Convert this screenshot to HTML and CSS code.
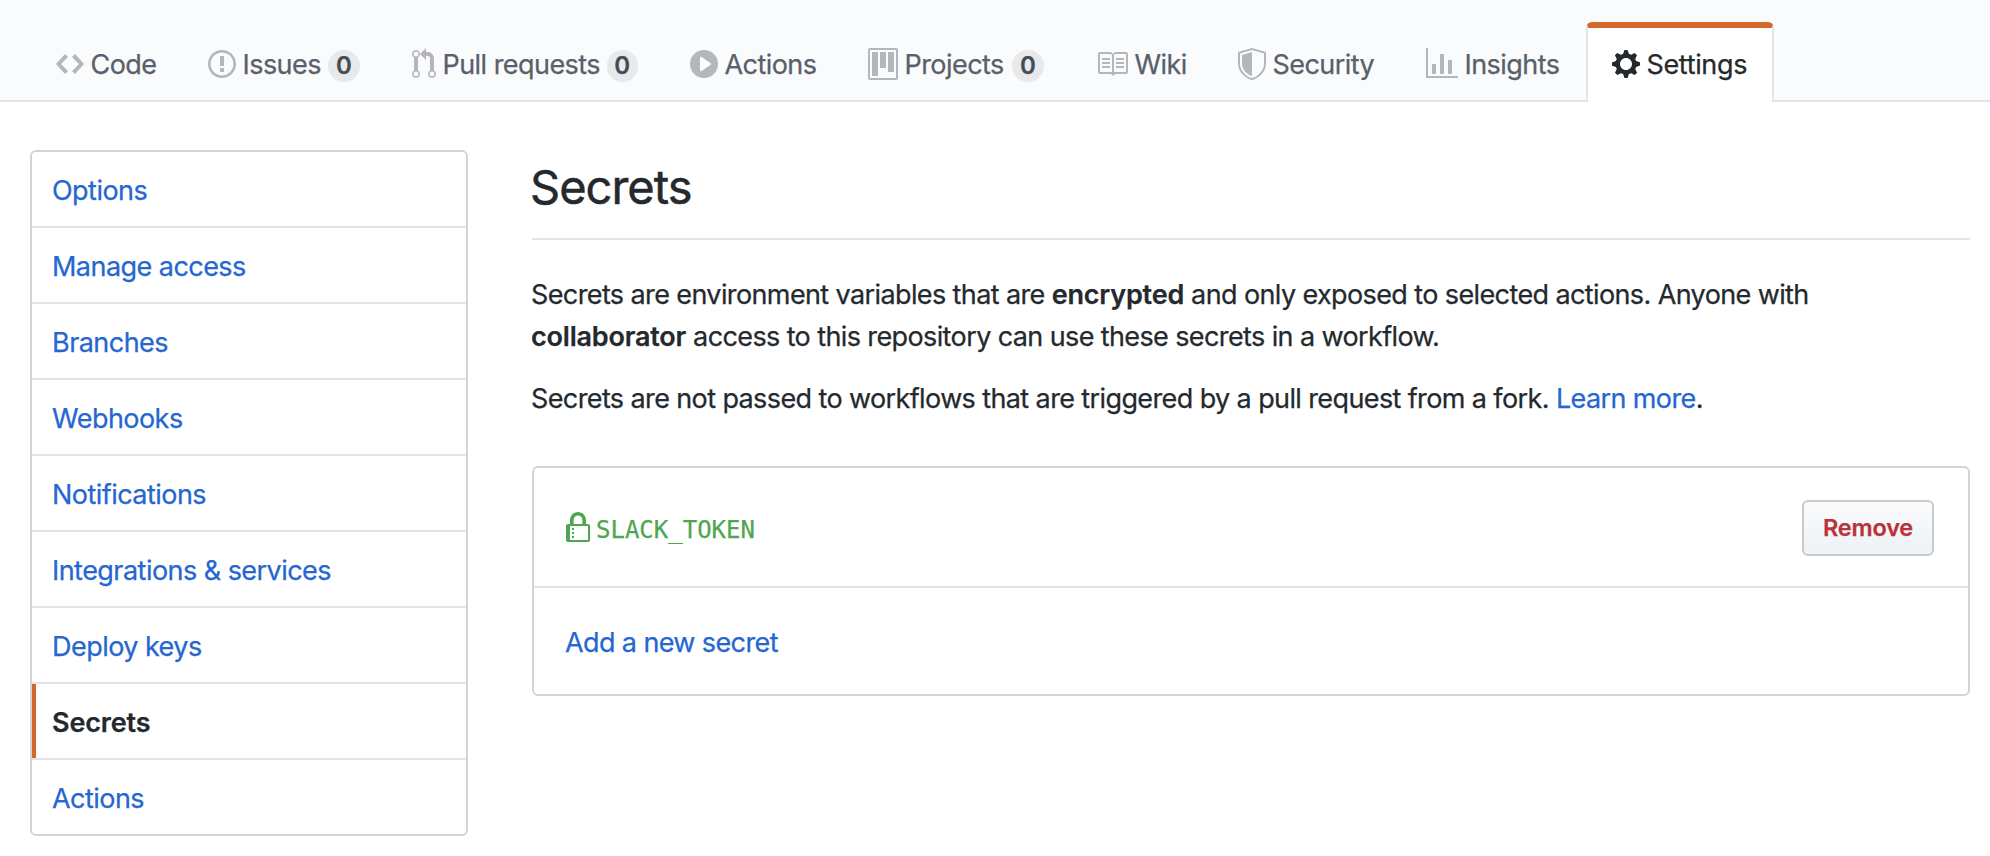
FILE: index.html
```html
<!DOCTYPE html>
<html lang="en">
<head>
<meta charset="utf-8">
<title>Secrets</title>
<link rel="stylesheet" href="styles.css">
</head>
<body>
<header class="repo-head">
  <nav class="tabs">
    <a class="tab"><svg class="icon" width="28" height="32" viewBox="0 0 14 16"><path d="M9.5 3L8 4.5 11.5 8 8 11.500 9.5 13 14 8 9.5 3zm-5 0L0 8l4.5 5L6 11.500 2.500 8 6 4.500 4.500 3z"/></svg><span class="label">Code</span></a>
    <a class="tab"><svg class="icon" width="28" height="32" viewBox="0 0 14 16"><path d="M7 2.300c3.140 0 5.700 2.560 5.700 5.700s-2.560 5.700-5.700 5.700A5.710 5.710 0 0 1 1.300 8c0-3.140 2.560-5.700 5.700-5.700zM7 1C3.140 1 0 4.140 0 8s3.140 7 7 7 7-3.140 7-7-3.140-7-7-7zm1 3H6v5h2V4zm0 6H6v2h2v-2z" fill-rule="evenodd"/></svg><span class="label">Issues</span><span class="count">0</span></a>
    <a class="tab"><svg class="icon" width="24" height="32" viewBox="0 0 12 16"><path d="M11 11.280V5c-.03-.78-.34-1.470-.94-2.060C9.460 2.350 8.780 2.030 8 2H7V0L4 3l3 3V4h1c.27.02.48.11.69.31.21.2.3.42.31.69v6.280A1.993 1.993 0 0 0 10 15a1.993 1.993 0 0 0 1-3.720zm-1 2.920c-.66 0-1.200-.55-1.200-1.200 0-.65.55-1.200 1.200-1.200.65 0 1.200.55 1.200 1.200 0 .65-.55 1.200-1.200 1.200zM4 3c0-1.110-.89-2-2-2a1.993 1.993 0 0 0-1 3.720v6.560A1.993 1.993 0 0 0 2 15a1.993 1.993 0 0 0 1-3.720V4.720c.59-.34 1-.98 1-1.720zm-.8 10c0 .66-.55 1.200-1.200 1.200-.65 0-1.200-.55-1.200-1.200 0-.65.55-1.200 1.200-1.200.65 0 1.200.55 1.200 1.200zM2 4.200C1.340 4.200.8 3.650.8 3c0-.65.55-1.200 1.200-1.200.65 0 1.200.55 1.200 1.200 0 .65-.55 1.200-1.200 1.200z" fill-rule="evenodd"/></svg><span class="label">Pull requests</span><span class="count">0</span></a>
    <a class="tab"><svg class="icon" width="28" height="32" viewBox="0 0 14 16"><path d="M14 8A7 7 0 1 1 0 8a7 7 0 0 1 14 0zm-8.223 3.482l4.599-3.066a.5.5 0 0 0 0-.832L5.777 4.518A.5.5 0 0 0 5 4.934v6.132a.5.5 0 0 0 .777.416z" fill-rule="evenodd"/></svg><span class="label">Actions</span></a>
    <a class="tab"><svg class="icon" width="30" height="32" viewBox="0 0 15 16"><path d="M10 12h3V2h-3v10zm-4-2h3V2H6v8zm-4 4h3V2H2v12zm-1 1h13V1H1v14zM14 0H1a1 1 0 0 0-1 1v14a1 1 0 0 0 1 1h13a1 1 0 0 0 1-1V1a1 1 0 0 0-1-1z" fill-rule="evenodd"/></svg><span class="label">Projects</span><span class="count">0</span></a>
    <a class="tab"><svg class="icon" width="32" height="32" viewBox="0 0 16 16"><path d="M3 5h4v1H3V5zm0 3h4V7H3v1zm0 2h4V9H3v1zm11-5h-4v1h4V5zm0 2h-4v1h4V7zm0 2h-4v1h4V9zm2-6v9c0 .55-.45 1-1 1H9.500l-1 1-1-1H2c-.55 0-1-.45-1-1V3c0-.55.45-1 1-1h5.500l1 1 1-1H15c.55 0 1 .45 1 1zm-8 .5L7.500 3H2v9h6V3.500zm7-.5H9.500l-.5.5V12h6V3z" fill-rule="evenodd"/></svg><span class="label">Wiki</span></a>
    <a class="tab"><svg class="icon" width="28" height="32" viewBox="0 0 14 16"><path d="M0 2l7-2 7 2v6.020C14 12.690 8.690 16 7 16c-1.690 0-7-3.310-7-7.980V2zm1 .75L7 1l6 1.750v5.268C13 12.104 8.449 15 7 15c-1.449 0-6-2.896-6-6.982V2.750zm1 .75L7 2v12c-1.207 0-5-2.482-5-5.985V3.500z" fill-rule="evenodd"/></svg><span class="label">Security</span></a>
    <a class="tab"><svg class="icon" width="32" height="32" viewBox="0 0 16 16"><path d="M16 14v1H0V0h1v14h15zM5 13H3V8h2v5zm4 0H7V3h2v10zm4 0h-2V6h2v7z"/></svg><span class="label">Insights</span></a>
    <a class="tab selected"><svg class="icon" width="28" height="32" viewBox="0 0 14 16"><path d="M14 8.770v-1.600l-1.940-.64-.45-1.090.88-1.840-1.130-1.130-1.810.91-1.090-.45-.69-1.920h-1.600l-.63 1.940-1.110.45-1.840-.88-1.130 1.130.91 1.810-.45 1.090L0 7.230v1.590l1.940.64.45 1.090-.88 1.840 1.130 1.130 1.810-.91 1.090.45.69 1.920h1.590l.63-1.940 1.110-.45 1.840.88 1.130-1.130-.92-1.810.47-1.090L14 8.750v.02zM7 11c-1.660 0-3-1.340-3-3s1.340-3 3-3 3 1.340 3 3-1.340 3-3 3z" fill-rule="evenodd"/></svg><span class="label">Settings</span></a>
  </nav>
</header>
<div class="layout">
  <nav class="menu">
    <a class="menu-item">Options</a>
    <a class="menu-item">Manage access</a>
    <a class="menu-item">Branches</a>
    <a class="menu-item">Webhooks</a>
    <a class="menu-item">Notifications</a>
    <a class="menu-item">Integrations &amp; services</a>
    <a class="menu-item">Deploy keys</a>
    <a class="menu-item current">Secrets</a>
    <a class="menu-item">Actions</a>
  </nav>
  <main class="content">
    <h1 class="title">Secrets</h1>
    <p class="note">Secrets are environment variables that are <strong>encrypted</strong> and only exposed to selected actions. Anyone with<br><strong>collaborator</strong> access to this repository can use these secrets in a workflow.</p>
    <p class="note">Secrets are not passed to workflows that are triggered by a pull request from a fork. <a class="link">Learn more</a>.</p>
    <section class="box">
      <div class="secret">
        <svg class="lock" width="24" height="32" viewBox="0 0 12 16"><path d="M4 13H3v-1h1v1zm8-6v7c0 .55-.45 1-1 1H1c-.55 0-1-.45-1-1V7c0-.55.45-1 1-1h1V4c0-2.200 1.800-4 4-4s4 1.800 4 4v2h1c.55 0 1 .45 1 1zM3.800 6h4.410V4c0-1.220-.98-2.200-2.200-2.200-1.220 0-2.200.98-2.200 2.200v2H3.800zM11 7H2v7h9V7zM4 8H3v1h1V8zm0 2H3v1h1v-1z" fill-rule="evenodd"/></svg>
        <code class="secret-name">SLACK_TOKEN</code>
        <button class="remove" type="button">Remove</button>
      </div>
      <div class="add"><a class="link">Add a new secret</a></div>
    </section>
  </main>
</div>
</body>
</html>
```
FILE: styles.css
```css
* { box-sizing: border-box; }

body {
  margin: 0;
  background: #fff;
  color: #24292e;
  font-family: Inter, "Liberation Sans", sans-serif;
  font-size: 27px;
  line-height: 42px;
  letter-spacing: -0.61px;
  -webkit-text-stroke: 0.25px;
}

.repo-head {
  height: 102px;
  padding: 22px 0 0 30px;
  background: #fafbfd;
  border-bottom: 2px solid #e1e4e8;
}

.tabs {
  display: grid;
  grid-template-columns: 152px 204px 278px 178px 228px 142px 188px 186px 188px;
  height: 80px;
  letter-spacing: -0.55px;
}

.tab {
  display: flex;
  align-items: center;
  gap: 6.5px;
  padding: 0 24px 2px;
  border: 2px solid transparent;
  border-top-width: 6px;
  border-bottom: 0;
  border-radius: 6px 6px 0 0;
  color: #586069;
  white-space: nowrap;
}

.tab.selected {
  background: #fff;
  border-color: #d4682b #e1e4e8 transparent;
  color: #24292e;
  letter-spacing: -0.35px;
}

.label { padding-top: 2px; }

.icon { flex: none; fill: #b5b6b8; }
.selected .icon { fill: #24292e; }

.count {
  width: 32px;
  height: 32px;
  margin: 4px 0 0 auto;
  border-radius: 16px;
  background: #e8e9eb;
  color: #444d56;
  font-size: 24px;
  font-weight: 600;
  line-height: 31px;
  letter-spacing: 0;
  text-align: center;
}

.layout {
  display: grid;
  grid-template-columns: 438px 1438px;
  column-gap: 64px;
  align-items: start;
  padding: 48px 20px 0 30px;
}

.menu {
  border: 2px solid #d1d5da;
  border-radius: 6px;
  overflow: hidden;
  letter-spacing: -0.54px;
}

.menu-item {
  display: flex;
  align-items: center;
  height: 76px;
  padding: 4px 20px 0;
  border-bottom: 2px solid #e1e4e8;
  color: #2566d0;
}

.menu-item:last-child { height: 74px; border-bottom: 0; }

.menu-item.current {
  background: linear-gradient(#d4682b, #d4682b) 0 0 / 4px 74px no-repeat;
  color: #24292e;
  font-weight: 600;
  letter-spacing: -0.15px;
}

.title {
  height: 90px;
  margin: 0 0 34px;
  padding-top: 7px;
  border-bottom: 2px solid #e1e4e8;
  font-size: 47px;
  font-weight: 400;
  line-height: 60px;
  letter-spacing: -1px;
  text-indent: -2px;
  -webkit-text-stroke: 0.5px;
}

.note { margin: 0 0 20px -1px; }
.note strong { font-weight: 600; letter-spacing: -0.2px; }
.link { color: #2566d0; }

.box {
  margin-top: 46px;
  border: 2px solid #d1d5da;
  border-radius: 6px;
}

.secret {
  display: flex;
  align-items: center;
  height: 120px;
  padding: 32px 34px 30px 32px;
  border-bottom: 2px solid #e1e4e8;
}

.lock { fill: #4fa64f; }

.secret-name {
  margin-left: 6px;
  padding-top: 4px;
  color: #4fa64f;
  font: 24px/32px "DejaVu Sans Mono", monospace;
  letter-spacing: 0;
}

.remove {
  width: 132px;
  height: 56px;
  margin-left: auto;
  padding: 0;
  border: 2px solid #c9cbce;
  border-radius: 6px;
  background: linear-gradient(#fafbfc, #eff3f6 90%);
  color: #b93338;
  font: 600 23.5px/50px Inter, sans-serif;
  letter-spacing: -0.2px;
}

.add {
  display: flex;
  align-items: center;
  height: 106px;
  padding: 4px 31px 0;
}
```
